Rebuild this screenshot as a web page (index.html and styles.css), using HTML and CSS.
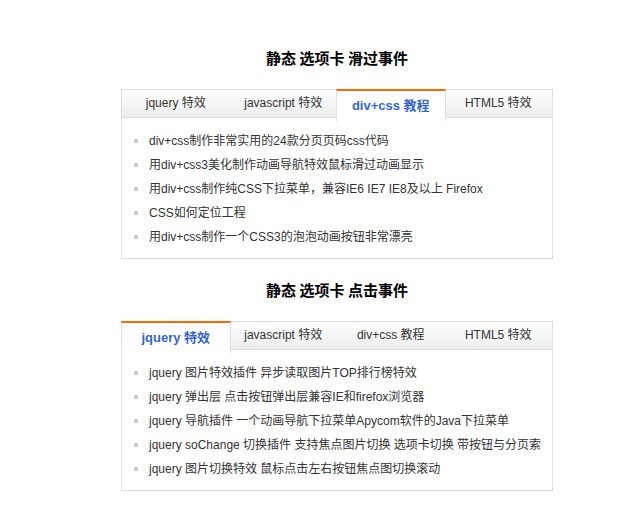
FILE: index.html
```html
<!DOCTYPE html>
<html lang="zh-CN">

<head>
  <meta charset="utf-8">
  <title>静态选项卡</title>
  <link rel="stylesheet" href="styles.css">
</head>

<body>
  <div class="wrap">
    <h2 class="title">静态 选项卡 滑过事件</h2>
    <div class="tab-box">
      <ul class="tabs">
        <li>jquery 特效</li>
        <li>javascript 特效</li>
        <li class="on">div+css 教程</li>
        <li>HTML5 特效</li>
      </ul>
      <ul class="list">
        <li><a href="#">div+css制作非常实用的24款分页页码css代码</a></li>
        <li><a href="#">用div+css3美化制作动画导航特效鼠标滑过动画显示</a></li>
        <li><a href="#">用div+css制作纯CSS下拉菜单，兼容IE6 IE7 IE8及以上 Firefox</a></li>
        <li><a href="#">CSS如何定位工程</a></li>
        <li><a href="#">用div+css制作一个CSS3的泡泡动画按钮非常漂亮</a></li>
      </ul>
    </div>

    <h2 class="title">静态 选项卡 点击事件</h2>
    <div class="tab-box">
      <ul class="tabs">
        <li class="on">jquery 特效</li>
        <li>javascript 特效</li>
        <li>div+css 教程</li>
        <li>HTML5 特效</li>
      </ul>
      <ul class="list">
        <li><a href="#">jquery 图片特效插件 异步读取图片TOP排行榜特效</a></li>
        <li><a href="#">jquery 弹出层 点击按钮弹出层兼容IE和firefox浏览器</a></li>
        <li><a href="#">jquery 导航插件 一个动画导航下拉菜单Apycom软件的Java下拉菜单</a></li>
        <li><a href="#">jquery soChange 切换插件 支持焦点图片切换 选项卡切换 带按钮与分页索</a></li>
        <li><a href="#">jquery 图片切换特效 鼠标点击左右按钮焦点图切换滚动</a></li>
      </ul>
    </div>
  </div>
</body>

</html>
```

FILE: styles.css
```css
body {
  margin: 0;
  padding: 0;
  font-family: "Liberation Sans", Arial, "Noto Sans CJK SC", sans-serif;
  font-size: 12px;
  color: #333;
  background: #fff;
}

ul {
  margin: 0;
  padding: 0;
  list-style: none;
}

.wrap {
  width: 432px;
  margin-left: 121px;
  padding-top: 43px;
  display: flex;
  flex-direction: column;
}

.title {
  margin: 0 0 16px;
  height: 30px;
  line-height: 30px;
  text-align: center;
  font-size: 15px;
  font-weight: bold;
  color: #000;
  font-family: "Noto Sans CJK SC", sans-serif;
}

.tab-box {
  border: 1px solid #ddd;
  margin-bottom: 16px;
}

.tabs {
  display: grid;
  grid-template-columns: repeat(4, 1fr);
  height: 27px;
  border-bottom: 1px solid #ddd;
  background: linear-gradient(#fff, #ececec);
}

.tabs li {
  line-height: 27px;
  text-align: center;
  cursor: pointer;
}

.tabs li.on {
  margin: -1px -1px -1px;
  border-top: 2px solid #f60;
  border-left: 1px solid #ddd;
  border-right: 1px solid #ddd;
  background: #fff;
  color: #3366cc;
  font-weight: bold;
  font-size: 13px;
  line-height: 30px;
}

.list {
  padding: 11px 0 9px 12px;
}

.list li {
  height: 24px;
  line-height: 24px;
  display: flex;
  align-items: center;
}

.list li::before {
  content: "";
  width: 4px;
  height: 4px;
  background: #ccc;
  margin-right: 11px;
}

.list a {
  color: #333;
  text-decoration: none;
}
```
